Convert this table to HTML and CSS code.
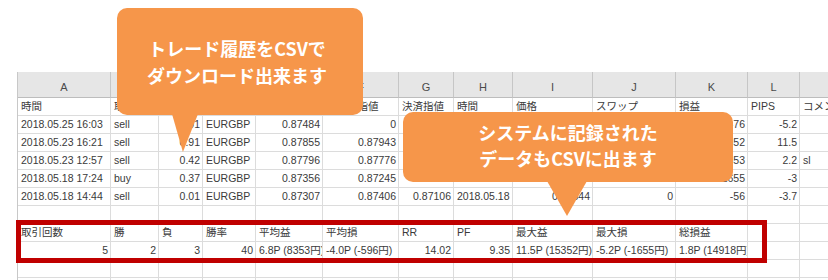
FILE: index.html
```html
<!DOCTYPE html>
<html lang="ja">
<head>
<meta charset="utf-8">
<title>CSV</title>
<link rel="stylesheet" href="styles.css">
</head>
<body>
<div class="page">
  <div class="sheet">
    <div class="c hd">A</div><div class="c hd">B</div><div class="c hd">C</div><div class="c hd">D</div><div class="c hd">E</div><div class="c hd">F</div><div class="c hd">G</div><div class="c hd">H</div><div class="c hd">I</div><div class="c hd">J</div><div class="c hd">K</div><div class="c hd">L</div><div class="c hd">M</div>

    <div class="c">時間</div><div class="c">取引</div><div class="c">数量</div><div class="c">通貨ペア</div><div class="c">約定価格</div><div class="c">決済逆指値</div><div class="c">決済指値</div><div class="c">時間</div><div class="c">価格</div><div class="c">スワップ</div><div class="c">損益</div><div class="c">PIPS</div><div class="c">コメント</div>

    <div class="c">2018.05.25 16:03</div><div class="c">sell</div><div class="c r">0.01</div><div class="c">EURGBP</div><div class="c r">0.87484</div><div class="c r">0</div><div class="c r">0</div><div class="c">2018.05.25 17:10</div><div class="c r">0.87536</div><div class="c r">0</div><div class="c r">-76</div><div class="c r">-5.2</div><div class="c"></div>

    <div class="c">2018.05.23 16:21</div><div class="c">sell</div><div class="c r">0.91</div><div class="c">EURGBP</div><div class="c r">0.87855</div><div class="c r">0.87943</div><div class="c r">0.8774</div><div class="c">2018.05.23 18:02</div><div class="c r">0.8774</div><div class="c r">0</div><div class="c r">15352</div><div class="c r">11.5</div><div class="c"></div>

    <div class="c">2018.05.23 12:57</div><div class="c">sell</div><div class="c r">0.42</div><div class="c">EURGBP</div><div class="c r">0.87796</div><div class="c r">0.87776</div><div class="c r">0</div><div class="c">2018.05.23 13:40</div><div class="c r">0.87774</div><div class="c r">0</div><div class="c r">1353</div><div class="c r">2.2</div><div class="c">sl</div>

    <div class="c">2018.05.18 17:24</div><div class="c">buy</div><div class="c r">0.37</div><div class="c">EURGBP</div><div class="c r">0.87356</div><div class="c r">0.87245</div><div class="c r">0</div><div class="c">2018.05.18 19:05</div><div class="c r">0.87326</div><div class="c r">0</div><div class="c r">-1655</div><div class="c r">-3</div><div class="c"></div>

    <div class="c">2018.05.18 14:44</div><div class="c">sell</div><div class="c r">0.01</div><div class="c">EURGBP</div><div class="c r">0.87307</div><div class="c r">0.87406</div><div class="c r">0.87106</div><div class="c">2018.05.18 15:12</div><div class="c r">0.87344</div><div class="c r">0</div><div class="c r">-56</div><div class="c r">-3.7</div><div class="c"></div>

    <div class="c"></div><div class="c"></div><div class="c"></div><div class="c"></div><div class="c"></div><div class="c"></div><div class="c"></div><div class="c"></div><div class="c"></div><div class="c"></div><div class="c"></div><div class="c"></div><div class="c"></div>

    <div class="c">取引回数</div><div class="c">勝</div><div class="c">負</div><div class="c">勝率</div><div class="c">平均益</div><div class="c">平均損</div><div class="c">RR</div><div class="c">PF</div><div class="c">最大益</div><div class="c">最大損</div><div class="c">総損益</div><div class="c"></div><div class="c"></div>

    <div class="c r">5</div><div class="c r">2</div><div class="c r">3</div><div class="c r">40</div><div class="c">6.8P (8353円)</div><div class="c">-4.0P (-596円)</div><div class="c r">14.02</div><div class="c r">9.35</div><div class="c">11.5P (15352円)</div><div class="c">-5.2P (-1655円)</div><div class="c">1.8P (14918円)</div><div class="c"></div><div class="c"></div>

    <div class="c"></div><div class="c"></div><div class="c"></div><div class="c"></div><div class="c"></div><div class="c"></div><div class="c"></div><div class="c"></div><div class="c"></div><div class="c"></div><div class="c"></div><div class="c"></div><div class="c"></div>

    <div class="c"></div><div class="c"></div><div class="c"></div><div class="c"></div><div class="c"></div><div class="c"></div><div class="c"></div><div class="c"></div><div class="c"></div><div class="c"></div><div class="c"></div><div class="c"></div><div class="c"></div>
  </div>

  <div class="callout callout-download">トレード履歴をCSVで<br>ダウンロード出来ます</div>
  <div class="callout callout-system">システムに記録された<br>データもCSVに出ます</div>
  <div class="highlight"></div>
</div>
</body>
</html>
```

FILE: styles.css
```css
html, body {
  margin: 0;
  padding: 0;
  background: #ffffff;
  overflow: hidden;
}

.page {
  position: relative;
  width: 828px;
  height: 280px;
  overflow: hidden;
}

.sheet {
  margin: 72px 0 0 17px;
  border-left: 1px solid #c8c8c8;
  display: grid;
  grid-template-columns: 93px 48px 44px 53px 67px 76px 55px 59px 80px 83px 72px 52px 100px;
  grid-template-rows: 26px;
  grid-auto-rows: 18px;
  width: max-content;
  font-family: "Liberation Sans", "Noto Sans CJK JP", sans-serif;
  font-size: 10.5px;
  color: #3a3a3a;
}

.c {
  box-sizing: border-box;
  border-right: 1px solid #dcdcdc;
  border-bottom: 1px solid #dcdcdc;
  padding: 0 2px 0 3px;
  line-height: 17px;
  white-space: nowrap;
  overflow: hidden;
}

.r {
  text-align: right;
}

.hd {
  height: 26px;
  background: #e6e6e6;
  border-right: 1px solid #c6c6c6;
  border-bottom: 1px solid #bdbdbd;
  text-align: center;
  padding: 6px 0 0 0;
  line-height: 18px;
  font-size: 11px;
  color: #4a4a4a;
}

.callout {
  position: absolute;
  box-sizing: border-box;
  background: #f6964a;
  border-radius: 10px;
  color: #ffffff;
  font-family: "Noto Sans CJK JP", "Noto Sans", sans-serif;
  font-weight: 700;
  font-size: 18px;
  text-align: center;
  display: flex;
  align-items: center;
  justify-content: center;
}

.callout::after {
  content: "";
  position: absolute;
  background: #f6964a;
}

.callout-download {
  left: 117px;
  top: 8px;
  width: 246px;
  height: 107px;
  line-height: 27px;
  padding-right: 6px;
}

.callout-download::after {
  left: 55px;
  top: 106px;
  width: 26px;
  height: 38px;
  clip-path: polygon(0 0, 100% 0, 42% 100%);
}

.callout-system {
  left: 403px;
  top: 112px;
  width: 330px;
  height: 70px;
  line-height: 26px;
  padding-bottom: 4px;
}

.callout-system::after {
  left: 144px;
  top: 69px;
  width: 40px;
  height: 35px;
  clip-path: polygon(0 0, 100% 0, 50% 100%);
}

.highlight {
  position: absolute;
  box-sizing: border-box;
  left: 16px;
  top: 220px;
  width: 751px;
  height: 43px;
  border: 5px solid #c00000;
}
```
